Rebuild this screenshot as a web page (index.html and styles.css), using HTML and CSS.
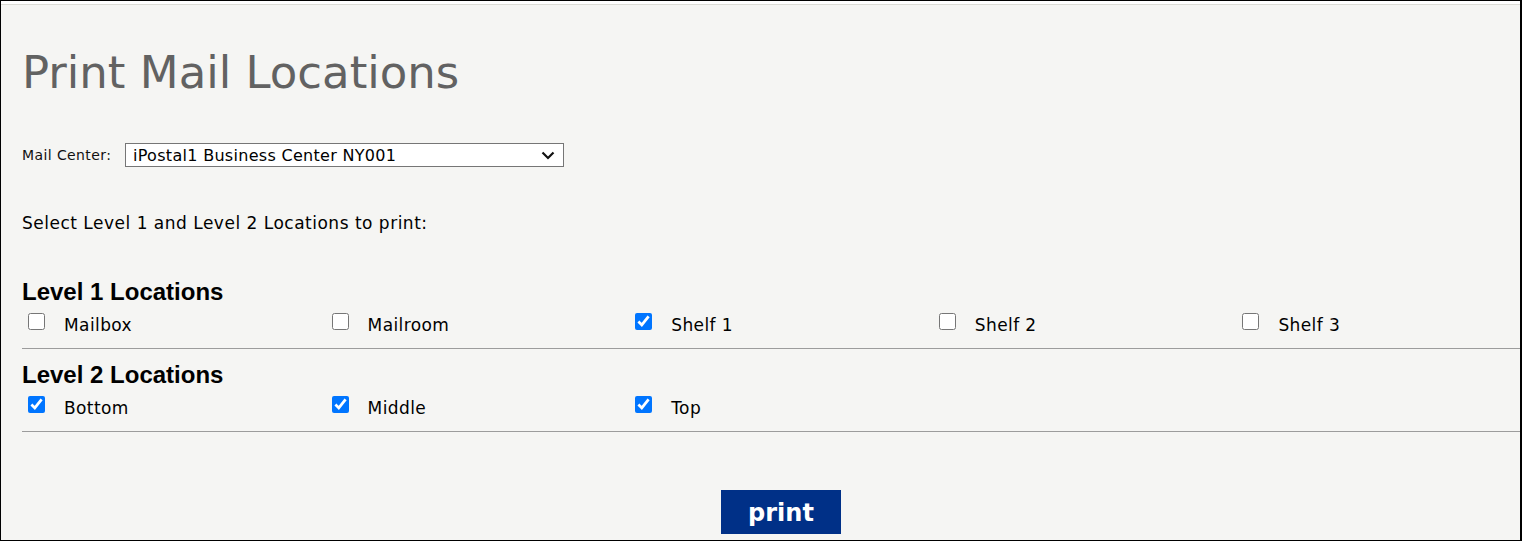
FILE: index.html
```html
<!DOCTYPE html>
<html>
<head>
<meta charset="utf-8">
<link rel="stylesheet" href="styles.css">
</head>
<body>
<div class="frame">
  <div class="page">
    <h1 class="title">Print Mail Locations</h1>
    <div class="center-row">
      <label class="center-label">Mail Center:</label>
      <div class="select">
        <span class="select-text">iPostal1 Business Center NY001</span>
        <svg class="chev" width="14" height="9" viewBox="0 0 14 9"><path d="M1.5 1.5 L7 7 L12.5 1.5" fill="none" stroke="#111" stroke-width="2.2"/></svg>
      </div>
    </div>
    <p class="instr">Select Level 1 and Level 2 Locations to print:</p>
    <section class="group">
      <h2 class="group-title">Level 1 Locations</h2>
      <div class="opts">
        <label class="opt"><input type="checkbox"><span>Mailbox</span></label>
        <label class="opt"><input type="checkbox"><span>Mailroom</span></label>
        <label class="opt"><input type="checkbox" checked><span>Shelf 1</span></label>
        <label class="opt"><input type="checkbox"><span>Shelf 2</span></label>
        <label class="opt"><input type="checkbox"><span>Shelf 3</span></label>
      </div>
    </section>
    <section class="group">
      <h2 class="group-title">Level 2 Locations</h2>
      <div class="opts">
        <label class="opt"><input type="checkbox" checked><span>Bottom</span></label>
        <label class="opt"><input type="checkbox" checked><span>Middle</span></label>
        <label class="opt"><input type="checkbox" checked><span>Top</span></label>
      </div>
    </section>
    <div class="actions">
      <button class="print-btn">print</button>
    </div>
  </div>
</div>
</body>
</html>
```
FILE: styles.css
```css
html, body {
  margin: 0;
  padding: 0;
  background: #fff;
}
.frame {
  box-sizing: border-box;
  width: 1522px;
  height: 541px;
  border: 1px solid #000;
  border-right-width: 2px;
  overflow: hidden;
  padding-top: 3px;
  background: #fff;
}
.page {
  height: 100%;
  background: #f5f5f3;
  border-top: 1px solid #dcdcd6;
  padding-left: 21px;
  font-family: "DejaVu Sans", Verdana, sans-serif;
  color: #111;
  overflow: hidden;
}
.title {
  margin: 0;
  padding-top: 38px;
  font-family: "DejaVu Sans", Verdana, sans-serif;
  font-weight: normal;
  font-size: 45px;
  line-height: 60px;
  color: #626262;
}
.center-row {
  display: flex;
  align-items: center;
  margin-top: 40px;
  height: 24px;
}
.center-label {
  font-size: 14px;
  letter-spacing: 0.4px;
  width: 103px;
  color: #111;
}
.select {
  box-sizing: border-box;
  width: 439px;
  height: 24px;
  background: #fff;
  border: 1px solid #767676;
  display: flex;
  align-items: center;
  justify-content: space-between;
  padding: 0 8px 0 7px;
}
.select-text {
  font-size: 16px;
  letter-spacing: 0.3px;
  color: #000;
}
.instr {
  margin: 46px 0 0;
  font-size: 17px;
  letter-spacing: 0.5px;
  line-height: 20px;
  color: #000;
}
.group {
  width: 1540px;
  border-bottom: 1px solid #9c9c9c;
  padding-bottom: 13px;
}
.instr + .group {
  margin-top: 46px;
}
.group + .group {
  padding-top: 13px;
}
.group-title {
  margin: 0;
  font-family: "Liberation Sans", Arial, sans-serif;
  font-weight: bold;
  font-size: 24px;
  line-height: 26px;
  color: #000;
}
.opts {
  display: flex;
  margin-top: 8px;
}
.opt {
  width: 303.6px;
  height: 22px;
  display: flex;
  align-items: flex-start;
  font-size: 17px;
  line-height: 20px;
  letter-spacing: 0.4px;
  color: #000;
}
.opt input {
  width: 17px;
  height: 17px;
  margin: 0 19px 0 6px;
  accent-color: #0075ff;
}
.opt span {
  margin-top: 2px;
}
.actions {
  display: flex;
  justify-content: center;
  width: 1518px;
  margin-top: 58px;
}
.print-btn {
  width: 120px;
  height: 44px;
  border: none;
  background: #003087;
  color: #fff;
  font-family: "DejaVu Sans", Verdana, sans-serif;
  font-weight: bold;
  font-size: 24px;
  padding: 2px 0 0;
}
```
